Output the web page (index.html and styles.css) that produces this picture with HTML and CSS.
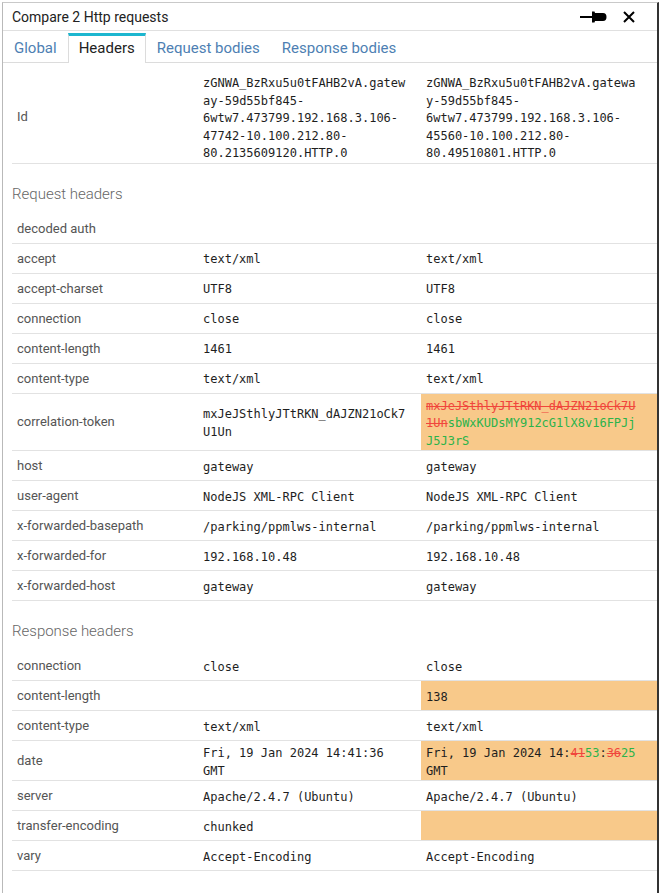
FILE: index.html
```html
<!DOCTYPE html>
<html lang="en">
<head>
    <meta charset="UTF-8">
    <title>Compare 2 Http requests</title>
    <link rel="stylesheet" href="styles.css">
</head>
<body>
    <div class="dialog">
        <div class="titlebar">
            <span class="title">Compare 2 Http requests</span>
            <div class="actions">
                <svg class="pin" width="27" height="12" viewBox="0 0 27 12">
                    <rect x="0" y="5" width="14" height="2" fill="#000"/>
                    <path d="M12 0.5 L14.5 0.5 L15 2 L23 2 Q26.5 2 26.5 6 Q26.5 10 23 10 L15 10 L14.5 11.5 L12 11.5 Z" fill="#000"/>
                </svg>
                <svg class="close" width="12" height="12" viewBox="0 0 12 12">
                    <path d="M1 1 L11 11 M11 1 L1 11" stroke="#000" stroke-width="2" fill="none"/>
                </svg>
            </div>
        </div>

        <div class="tabs">
            <div class="tab">Global</div>
            <div class="tab active">Headers</div>
            <div class="tab">Request bodies</div>
            <div class="tab">Response bodies</div>
        </div>

        <div class="content">
            <table class="grid">
                <colgroup><col class="c-name"><col class="c-left"><col class="c-right"></colgroup>
                <tr>
                    <td class="name">Id</td>
                    <td class="val">zGNWA_BzRxu5u0tFAHB2vA.gateway-<wbr>59d55bf845-<wbr>6wtw7.473799.192.168.3.106-<wbr>47742-<wbr>10.100.212.80-<wbr>80.2135609120.HTTP.0</td>
                    <td class="val">zGNWA_BzRxu5u0tFAHB2vA.gateway-<wbr>59d55bf845-<wbr>6wtw7.473799.192.168.3.106-<wbr>45560-<wbr>10.100.212.80-<wbr>80.49510801.HTTP.0</td>
                </tr>
            </table>

            <h3 class="section">Request headers</h3>
            <table class="grid">
                <colgroup><col class="c-name"><col class="c-left"><col class="c-right"></colgroup>
                <tr><td class="name">decoded auth</td><td class="val"></td><td class="val"></td></tr>
                <tr><td class="name">accept</td><td class="val">text/xml</td><td class="val">text/xml</td></tr>
                <tr><td class="name">accept-charset</td><td class="val">UTF8</td><td class="val">UTF8</td></tr>
                <tr><td class="name">connection</td><td class="val">close</td><td class="val">close</td></tr>
                <tr><td class="name">content-length</td><td class="val">1461</td><td class="val">1461</td></tr>
                <tr><td class="name">content-type</td><td class="val">text/xml</td><td class="val">text/xml</td></tr>
                <tr>
                    <td class="name">correlation-token</td>
                    <td class="val">mxJeJSthlyJTtRKN_dAJZN21oCk7U1Un</td>
                    <td class="val diff"><del>mxJeJSthlyJTtRKN_dAJZN21oCk7U1Un</del><ins>sbWxKUDsMY912cG1lX8v16FPJjJ5J3rS</ins></td>
                </tr>
                <tr><td class="name">host</td><td class="val">gateway</td><td class="val">gateway</td></tr>
                <tr><td class="name">user-agent</td><td class="val">NodeJS XML-RPC Client</td><td class="val">NodeJS XML-RPC Client</td></tr>
                <tr><td class="name">x-forwarded-basepath</td><td class="val">/parking/ppmlws-internal</td><td class="val">/parking/ppmlws-internal</td></tr>
                <tr><td class="name">x-forwarded-for</td><td class="val">192.168.10.48</td><td class="val">192.168.10.48</td></tr>
                <tr><td class="name">x-forwarded-host</td><td class="val">gateway</td><td class="val">gateway</td></tr>
            </table>

            <h3 class="section">Response headers</h3>
            <table class="grid">
                <colgroup><col class="c-name"><col class="c-left"><col class="c-right"></colgroup>
                <tr><td class="name">connection</td><td class="val">close</td><td class="val">close</td></tr>
                <tr><td class="name">content-length</td><td class="val"></td><td class="val diff">138</td></tr>
                <tr><td class="name">content-type</td><td class="val">text/xml</td><td class="val">text/xml</td></tr>
                <tr>
                    <td class="name">date</td>
                    <td class="val">Fri, 19 Jan 2024 14:41:36 GMT</td>
                    <td class="val diff">Fri, 19 Jan 2024 14:<del>41</del><ins>53</ins>:<del>36</del><ins>25</ins> GMT</td>
                </tr>
                <tr><td class="name">server</td><td class="val">Apache/2.4.7 (Ubuntu)</td><td class="val">Apache/2.4.7 (Ubuntu)</td></tr>
                <tr><td class="name">transfer-encoding</td><td class="val">chunked</td><td class="val diff"></td></tr>
                <tr><td class="name">vary</td><td class="val">Accept-Encoding</td><td class="val">Accept-Encoding</td></tr>
            </table>
        </div>
    </div>
</body>
</html>
```

FILE: styles.css
```css
body { margin: 0; font-family: Roboto, "Noto Sans", sans-serif; background: #fff; }

.dialog { margin: 2px 0 0 2px; height: calc(100vh - 2px); box-sizing: border-box; border-top: 1px solid #c9c9c9; border-left: 1px solid #b9b9b9; border-right: 2px solid #333; overflow: hidden; }

.titlebar { display: flex; align-items: center; justify-content: space-between; height: 27px; padding-left: 9px; border-bottom: 1px solid #e0e0e0; }
.title { font-size: 14px; color: #222; }
.actions { display: flex; align-items: center; gap: 16px; padding-right: 22px; }
.actions svg { display: block; }

.tabs { display: flex; height: 31px; border-bottom: 1px solid #dcdcdc; }
.tab { margin-top: 2px; margin-bottom: -1px; padding: 0 10px 3px; display: flex; align-items: center; font-size: 15px; color: #4e7fb3; border: 1px solid transparent; border-top-width: 3px; border-bottom: none; }
.tab.active { color: #222; background: #fff; border-color: #dcdcdc; border-top-color: #1cb6cf; }

.content { padding: 8px 0 0 9px; }

.grid { width: 645px; margin-bottom: 2px; table-layout: fixed; border-collapse: separate; border-spacing: 0; }
.c-name { width: 186px; }
.c-left { width: 223px; }
.c-right { width: 236px; }
.grid td { height: 30px; box-sizing: border-box; padding: 2px 12px 2px 5px; border-bottom: 1px solid #e2e2e2; vertical-align: middle; }
.grid td.val { padding: 4px 12px 0 5px; }
.grid td.val:last-child { padding-right: 18px; }

.name { font-size: 13px; color: #555; }
.val { font-family: "DejaVu Sans Mono", monospace; font-size: 12px; line-height: 17.5px; color: #1e1e1e; overflow-wrap: anywhere; }

.diff { background: #f8c98a; }
.diff del { color: #f0463c; text-decoration: line-through; }
.diff ins { color: #2bb34a; text-decoration: none; }

.section { margin: 0; padding: 18px 0 10px; font-size: 15px; line-height: 20px; font-weight: 300; color: #666; }
```
